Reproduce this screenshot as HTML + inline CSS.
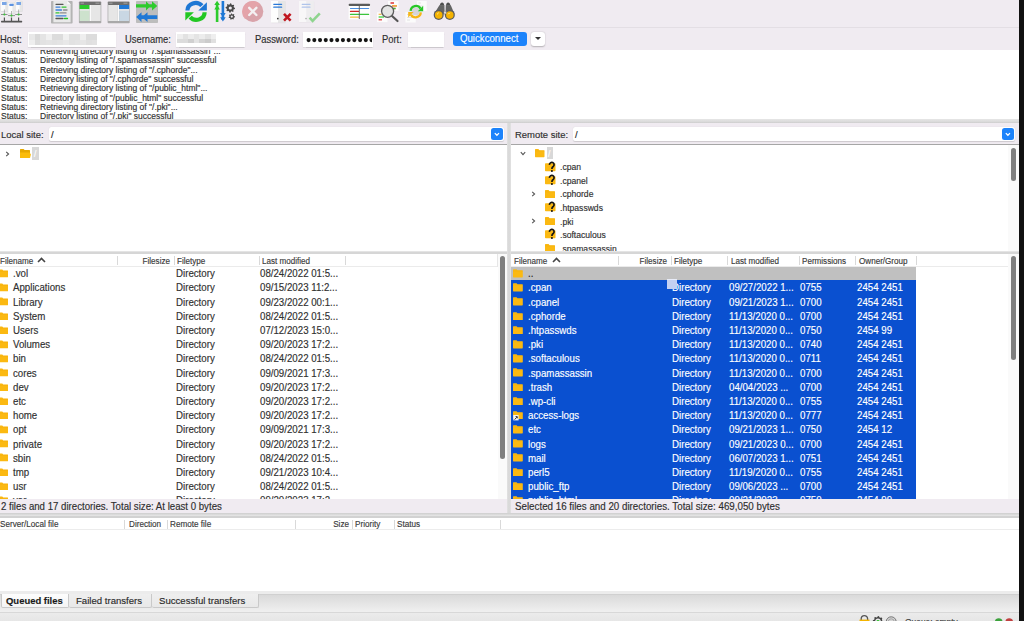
<!DOCTYPE html><html><head><meta charset="utf-8"><style>html,body{margin:0;padding:0;width:1024px;height:621px;overflow:hidden;background:#fff;position:relative}.t{position:absolute;white-space:nowrap;line-height:1;font-family:"Liberation Sans", sans-serif;-webkit-text-stroke:0.15px currentColor}</style></head><body><div style="position:absolute;left:0.00px;top:0.00px;width:1019.00px;height:50.00px;background:#f0ebf1"></div>
<div style="position:absolute;left:0.00px;top:27.30px;width:1019.00px;height:1.00px;background:#e3dee4"></div>
<div style="position:absolute;left:0.00px;top:50.00px;width:1019.00px;height:69.00px;background:#fff"></div>
<div style="position:absolute;left:0.00px;top:119.00px;width:1019.00px;height:4.00px;background:linear-gradient(#e6e6e6,#dcdcdc 60%,#cdcdcd)"></div>
<div style="position:absolute;left:1019.00px;top:0.00px;width:5.00px;height:621.00px;background:#111"></div>
<div class="t" style="left:0.00px;top:35px;font-size:10.34px;color:#2e2e2e;font-weight:normal;transform:scaleX(0.9090);transform-origin:0 0;">Host:</div>
<div style="position:absolute;left:28.00px;top:31.50px;width:88.00px;height:15.30px;background:#fff;box-shadow:0 0.5px 1px rgba(0,0,0,0.15)"></div>
<div style="position:absolute;left:28.90px;top:34.00px;width:5.75px;height:5.70px;background:#e8e8e8"></div>
<div style="position:absolute;left:28.90px;top:39.70px;width:5.75px;height:5.20px;background:#eeeeee"></div>
<div style="position:absolute;left:34.61px;top:34.00px;width:5.75px;height:5.70px;background:#d9d9d9"></div>
<div style="position:absolute;left:34.61px;top:39.70px;width:5.75px;height:5.20px;background:#dcdcdc"></div>
<div style="position:absolute;left:40.32px;top:34.00px;width:5.75px;height:5.70px;background:#e4e4e4"></div>
<div style="position:absolute;left:40.32px;top:39.70px;width:5.75px;height:5.20px;background:#e2e2e2"></div>
<div style="position:absolute;left:46.03px;top:34.00px;width:5.75px;height:5.70px;background:#f0f0f0"></div>
<div style="position:absolute;left:46.03px;top:39.70px;width:5.75px;height:5.20px;background:#e4e4e4"></div>
<div style="position:absolute;left:51.74px;top:34.00px;width:5.75px;height:5.70px;background:#dcdcdc"></div>
<div style="position:absolute;left:51.74px;top:39.70px;width:5.75px;height:5.20px;background:#e2e2e2"></div>
<div style="position:absolute;left:57.45px;top:34.00px;width:5.75px;height:5.70px;background:#dcdcdc"></div>
<div style="position:absolute;left:57.45px;top:39.70px;width:5.75px;height:5.20px;background:#e4e4e4"></div>
<div style="position:absolute;left:63.16px;top:34.00px;width:5.75px;height:5.70px;background:#f0f0f0"></div>
<div style="position:absolute;left:63.16px;top:39.70px;width:5.75px;height:5.20px;background:#e8e8e8"></div>
<div style="position:absolute;left:68.87px;top:34.00px;width:5.75px;height:5.70px;background:#e0e0e0"></div>
<div style="position:absolute;left:68.87px;top:39.70px;width:5.75px;height:5.20px;background:#e2e2e2"></div>
<div style="position:absolute;left:74.58px;top:34.00px;width:5.75px;height:5.70px;background:#e0e0e0"></div>
<div style="position:absolute;left:74.58px;top:39.70px;width:5.75px;height:5.20px;background:#e4e4e4"></div>
<div style="position:absolute;left:80.29px;top:34.00px;width:5.75px;height:5.70px;background:#eeeeee"></div>
<div style="position:absolute;left:80.29px;top:39.70px;width:5.75px;height:5.20px;background:#e6e6e6"></div>
<div style="position:absolute;left:86.00px;top:34.00px;width:5.75px;height:5.70px;background:#dcdcdc"></div>
<div style="position:absolute;left:86.00px;top:39.70px;width:5.75px;height:5.20px;background:#e0e0e0"></div>
<div style="position:absolute;left:91.71px;top:34.00px;width:5.75px;height:5.70px;background:#dcdcdc"></div>
<div style="position:absolute;left:91.71px;top:39.70px;width:5.75px;height:5.20px;background:#e2e2e2"></div>
<div class="t" style="left:125.00px;top:35px;font-size:10.34px;color:#2e2e2e;font-weight:normal;transform:scaleX(0.9090);transform-origin:0 0;">Username:</div>
<div style="position:absolute;left:176.00px;top:31.50px;width:69.00px;height:15.30px;background:#fff;box-shadow:0 0.5px 1px rgba(0,0,0,0.15)"></div>
<div style="position:absolute;left:177.00px;top:33.90px;width:5.63px;height:5.50px;background:#eeeeee"></div>
<div style="position:absolute;left:177.00px;top:39.40px;width:5.63px;height:3.50px;background:#dcdcdc"></div>
<div style="position:absolute;left:182.59px;top:33.90px;width:5.63px;height:5.50px;background:#e2e2e2"></div>
<div style="position:absolute;left:182.59px;top:39.40px;width:5.63px;height:3.50px;background:#dcdcdc"></div>
<div style="position:absolute;left:188.18px;top:33.90px;width:5.63px;height:5.50px;background:#ececec"></div>
<div style="position:absolute;left:188.18px;top:39.40px;width:5.63px;height:3.50px;background:#d0d0d0"></div>
<div style="position:absolute;left:193.77px;top:33.90px;width:5.63px;height:5.50px;background:#e4e4e4"></div>
<div style="position:absolute;left:193.77px;top:39.40px;width:5.63px;height:3.50px;background:#e4e4e4"></div>
<div style="position:absolute;left:199.36px;top:33.90px;width:5.63px;height:5.50px;background:#ececec"></div>
<div style="position:absolute;left:199.36px;top:39.40px;width:5.63px;height:3.50px;background:#d4d4d4"></div>
<div style="position:absolute;left:204.95px;top:33.90px;width:5.63px;height:5.50px;background:#e2e2e2"></div>
<div style="position:absolute;left:204.95px;top:39.40px;width:5.63px;height:3.50px;background:#cccccc"></div>
<div style="position:absolute;left:210.54px;top:33.90px;width:5.63px;height:5.50px;background:#eeeeee"></div>
<div style="position:absolute;left:210.54px;top:39.40px;width:5.63px;height:3.50px;background:#e0e0e0"></div>
<div class="t" style="left:254.50px;top:35px;font-size:10.34px;color:#2e2e2e;font-weight:normal;transform:scaleX(0.9090);transform-origin:0 0;">Password:</div>
<div style="position:absolute;left:303.00px;top:31.50px;width:70.00px;height:15.30px;background:#fff;box-shadow:0 0.5px 1px rgba(0,0,0,0.15);overflow:hidden"></div>
<svg style="position:absolute;left:303px;top:31.5px" width="69" height="15" viewBox="0 -0.5 69 15"><circle cx="5.60" cy="7.6" r="2.05" fill="#151515"/><circle cx="11.32" cy="7.6" r="2.05" fill="#151515"/><circle cx="17.04" cy="7.6" r="2.05" fill="#151515"/><circle cx="22.76" cy="7.6" r="2.05" fill="#151515"/><circle cx="28.48" cy="7.6" r="2.05" fill="#151515"/><circle cx="34.20" cy="7.6" r="2.05" fill="#151515"/><circle cx="39.92" cy="7.6" r="2.05" fill="#151515"/><circle cx="45.64" cy="7.6" r="2.05" fill="#151515"/><circle cx="51.36" cy="7.6" r="2.05" fill="#151515"/><circle cx="57.08" cy="7.6" r="2.05" fill="#151515"/><circle cx="62.80" cy="7.6" r="2.05" fill="#151515"/><circle cx="68.52" cy="7.6" r="2.05" fill="#151515"/></svg>
<div class="t" style="left:381.50px;top:35px;font-size:10.34px;color:#2e2e2e;font-weight:normal;transform:scaleX(0.9090);transform-origin:0 0;">Port:</div>
<div style="position:absolute;left:408.00px;top:31.50px;width:36.00px;height:15.30px;background:#fff;box-shadow:0 0.5px 1px rgba(0,0,0,0.15)"></div>
<div style="position:absolute;left:453.00px;top:31.90px;width:74.00px;height:14.30px;background:#1c83fb;border-radius:3px"></div>
<div class="t" style="left:460.40px;top:34px;font-size:10.04px;color:#fff;font-weight:normal;transform:scaleX(0.9620);transform-origin:0 0;-webkit-text-stroke:0.1px #fff">Quickconnect</div>
<div style="position:absolute;left:531.30px;top:32.20px;width:13.50px;height:13.80px;background:#fff;border-radius:3px;box-shadow:0 0.5px 1.5px rgba(0,0,0,0.25)"></div>
<div style="position:absolute;left:534.8px;top:37.3px;width:0;height:0;border-left:3.3px solid transparent;border-right:3.3px solid transparent;border-top:3.2px solid #333"></div>
<div style="position:absolute;left:0;top:50px;width:1019px;height:69px;overflow:hidden">
<div class="t" style="left:0.70px;top:-3px;font-size:8.79px;color:#303030;font-weight:normal;transform:scaleX(0.9620);transform-origin:0 0;">Status:</div>
<div class="t" style="left:40.00px;top:-3px;font-size:8.84px;color:#303030;font-weight:normal;transform:scaleX(0.9620);transform-origin:0 0;">Retrieving directory listing of "/.spamassassin"...</div>
<div class="t" style="left:0.70px;top:6px;font-size:8.79px;color:#303030;font-weight:normal;transform:scaleX(0.9620);transform-origin:0 0;">Status:</div>
<div class="t" style="left:40.00px;top:6px;font-size:8.84px;color:#303030;font-weight:normal;transform:scaleX(0.9620);transform-origin:0 0;">Directory listing of "/.spamassassin" successful</div>
<div class="t" style="left:0.70px;top:16px;font-size:8.79px;color:#303030;font-weight:normal;transform:scaleX(0.9620);transform-origin:0 0;">Status:</div>
<div class="t" style="left:40.00px;top:16px;font-size:8.84px;color:#303030;font-weight:normal;transform:scaleX(0.9620);transform-origin:0 0;">Retrieving directory listing of "/.cphorde"...</div>
<div class="t" style="left:0.70px;top:25px;font-size:8.79px;color:#303030;font-weight:normal;transform:scaleX(0.9620);transform-origin:0 0;">Status:</div>
<div class="t" style="left:40.00px;top:25px;font-size:8.84px;color:#303030;font-weight:normal;transform:scaleX(0.9620);transform-origin:0 0;">Directory listing of "/.cphorde" successful</div>
<div class="t" style="left:0.70px;top:34px;font-size:8.79px;color:#303030;font-weight:normal;transform:scaleX(0.9620);transform-origin:0 0;">Status:</div>
<div class="t" style="left:40.00px;top:34px;font-size:8.84px;color:#303030;font-weight:normal;transform:scaleX(0.9620);transform-origin:0 0;">Retrieving directory listing of "/public_html"...</div>
<div class="t" style="left:0.70px;top:44px;font-size:8.79px;color:#303030;font-weight:normal;transform:scaleX(0.9620);transform-origin:0 0;">Status:</div>
<div class="t" style="left:40.00px;top:44px;font-size:8.84px;color:#303030;font-weight:normal;transform:scaleX(0.9620);transform-origin:0 0;">Directory listing of "/public_html" successful</div>
<div class="t" style="left:0.70px;top:53px;font-size:8.79px;color:#303030;font-weight:normal;transform:scaleX(0.9620);transform-origin:0 0;">Status:</div>
<div class="t" style="left:40.00px;top:53px;font-size:8.84px;color:#303030;font-weight:normal;transform:scaleX(0.9620);transform-origin:0 0;">Retrieving directory listing of "/.pki"...</div>
<div class="t" style="left:0.70px;top:62px;font-size:8.79px;color:#303030;font-weight:normal;transform:scaleX(0.9620);transform-origin:0 0;">Status:</div>
<div class="t" style="left:40.00px;top:62px;font-size:8.84px;color:#303030;font-weight:normal;transform:scaleX(0.9620);transform-origin:0 0;">Directory listing of "/.pki" successful</div>
</div>
<div style="position:absolute;left:0.00px;top:123.00px;width:507.00px;height:21.50px;background:#f0ebf1"></div>
<div style="position:absolute;left:511.00px;top:123.00px;width:508.00px;height:21.50px;background:#f0ebf1"></div>
<div style="position:absolute;left:507.00px;top:123.00px;width:4.00px;height:391.00px;background:linear-gradient(90deg,#e2e2e2,#d9d9d9 40%,#d9d9d9 60%,#e2e2e2)"></div>
<div style="position:absolute;left:0.00px;top:144.10px;width:507.00px;height:1.70px;background:#a6a6a6"></div>
<div style="position:absolute;left:511.00px;top:144.10px;width:508.00px;height:1.70px;background:#a6a6a6"></div>
<div class="t" style="left:0.50px;top:130px;font-size:9.83px;color:#2e2e2e;font-weight:normal;transform:scaleX(0.9620);transform-origin:0 0;">Local site:</div>
<div style="position:absolute;left:49.00px;top:127.00px;width:455.00px;height:14.00px;background:#fff;border-radius:2px;box-shadow:0 0.5px 1px rgba(0,0,0,0.15)"></div>
<div class="t" style="left:51.00px;top:130px;font-size:9.88px;color:#222;font-weight:normal;transform:scaleX(0.9620);transform-origin:0 0;">/</div>
<div style="position:absolute;left:491.30px;top:128.00px;width:11.70px;height:12.00px;background:#1c83fb;border-radius:2.5px"></div>
<svg style="position:absolute;left:491.3px;top:128px" width="12" height="12" viewBox="0 0 12 12"><path d="M3.8 5.1 L5.9 7.3 L8.0 5.1" stroke="#fff" stroke-width="1.25" fill="none"/></svg>
<div class="t" style="left:514.70px;top:130px;font-size:9.83px;color:#2e2e2e;font-weight:normal;transform:scaleX(0.9620);transform-origin:0 0;">Remote site:</div>
<div style="position:absolute;left:572.50px;top:127.00px;width:442.00px;height:14.00px;background:#fff;border-radius:2px;box-shadow:0 0.5px 1px rgba(0,0,0,0.15)"></div>
<div class="t" style="left:575.00px;top:130px;font-size:9.88px;color:#222;font-weight:normal;transform:scaleX(0.9620);transform-origin:0 0;">/</div>
<div style="position:absolute;left:1002.00px;top:128.00px;width:11.70px;height:12.00px;background:#1c83fb;border-radius:2.5px"></div>
<svg style="position:absolute;left:1002px;top:128px" width="12" height="12" viewBox="0 0 12 12"><path d="M3.8 5.1 L5.9 7.3 L8.0 5.1" stroke="#fff" stroke-width="1.25" fill="none"/></svg>
<div style="position:absolute;left:0.00px;top:145.20px;width:507.00px;height:106.00px;background:#fff"></div>
<div style="position:absolute;left:511.00px;top:145.20px;width:508.00px;height:106.00px;background:#fff"></div>
<svg style="position:absolute;left:4.80px;top:151.10px" width="5" height="6" viewBox="0 0 5 6"><path d="M1.2 0.8 L3.6 3 L1.2 5.2" stroke="#555" stroke-width="1.1" fill="none"/></svg>
<svg style="position:absolute;left:20px;top:148.8px" width="11" height="9" viewBox="0 0 11 9"><path d="M0 0.6 Q0 0 0.6 0 L3.6 0 L4.6 1 L9.4 1 Q10 1 10 1.6 L10 8.4 Q10 9 9.4 9 L0.6 9 Q0 9 0 8.4 Z" fill="#e6a800"/><path d="M0 3.6 L9.6 3.6 L10.9 5.4 L10 9 L0.6 9 Q0 9 0 8.4 Z" fill="#fbbc0a"/></svg>
<div style="position:absolute;left:32.00px;top:147.20px;width:7.00px;height:12.50px;background:#d8d8d8"></div>
<div class="t" style="left:33.50px;top:150px;font-size:8.94px;color:#fff;font-weight:normal;transform:scaleX(0.9620);transform-origin:0 0;">/</div>
<svg style="position:absolute;left:519.50px;top:151.00px" width="6" height="5" viewBox="0 0 6 5"><path d="M0.8 1.2 L3 3.6 L5.2 1.2" stroke="#555" stroke-width="1.1" fill="none"/></svg>
<svg style="position:absolute;left:535.00px;top:149.30px" width="9.5" height="8.3" viewBox="0 0 10 8.5"><path d="M0 0.6 Q0 0 0.6 0 L3.6 0 L4.6 1.2 L9.4 1.2 Q10 1.2 10 1.8 L10 7.9 Q10 8.5 9.4 8.5 L0.6 8.5 Q0 8.5 0 7.9 Z" fill="#fbb912"/><rect x="0" y="1.6" width="10" height="0.6" fill="#f0a800" opacity="0.5"/></svg>
<div style="position:absolute;left:546.70px;top:147.40px;width:6.80px;height:12.00px;background:#d8d8d8"></div>
<div class="t" style="left:548.20px;top:150px;font-size:8.94px;color:#fff;font-weight:normal;transform:scaleX(0.9620);transform-origin:0 0;">/</div>
<div style="position:absolute;left:511px;top:145.2px;width:497px;height:106.3px;overflow:hidden">
<svg style="position:absolute;left:34px;top:15.45px" width="12" height="12" viewBox="545 161 12 12"><rect x="545" y="163.3" width="10.5" height="7.9" rx="0.8" fill="#fbb912"/><path d="M549.5 164.9 A2.3 2.3 0 1 1 553.2 166.5 Q551.9 167.3 551.9 168.9" stroke="#151515" stroke-width="1.7" fill="none"/><circle cx="551.9" cy="171" r="1.05" fill="#151515"/></svg>
<div class="t" style="left:48.50px;top:18px;font-size:8.94px;color:#303030;font-weight:normal;transform:scaleX(0.9620);transform-origin:0 0;">.cpan</div>
<svg style="position:absolute;left:34px;top:29.00px" width="12" height="12" viewBox="545 161 12 12"><rect x="545" y="163.3" width="10.5" height="7.9" rx="0.8" fill="#fbb912"/><path d="M549.5 164.9 A2.3 2.3 0 1 1 553.2 166.5 Q551.9 167.3 551.9 168.9" stroke="#151515" stroke-width="1.7" fill="none"/><circle cx="551.9" cy="171" r="1.05" fill="#151515"/></svg>
<div class="t" style="left:48.50px;top:32px;font-size:8.94px;color:#303030;font-weight:normal;transform:scaleX(0.9620);transform-origin:0 0;">.cpanel</div>
<svg style="position:absolute;left:34.00px;top:44.65px" width="10" height="8.5" viewBox="0 0 10 8.5"><path d="M0 0.6 Q0 0 0.6 0 L3.6 0 L4.6 1.2 L9.4 1.2 Q10 1.2 10 1.8 L10 7.9 Q10 8.5 9.4 8.5 L0.6 8.5 Q0 8.5 0 7.9 Z" fill="#fbb912"/><rect x="0" y="1.6" width="10" height="0.6" fill="#f0a800" opacity="0.5"/></svg>
<svg style="position:absolute;left:19.50px;top:45.85px" width="5" height="6" viewBox="0 0 5 6"><path d="M1.2 0.8 L3.6 3 L1.2 5.2" stroke="#555" stroke-width="1.1" fill="none"/></svg>
<div class="t" style="left:48.50px;top:45px;font-size:8.94px;color:#303030;font-weight:normal;transform:scaleX(0.9620);transform-origin:0 0;">.cphorde</div>
<svg style="position:absolute;left:34px;top:56.10px" width="12" height="12" viewBox="545 161 12 12"><rect x="545" y="163.3" width="10.5" height="7.9" rx="0.8" fill="#fbb912"/><path d="M549.5 164.9 A2.3 2.3 0 1 1 553.2 166.5 Q551.9 167.3 551.9 168.9" stroke="#151515" stroke-width="1.7" fill="none"/><circle cx="551.9" cy="171" r="1.05" fill="#151515"/></svg>
<div class="t" style="left:48.50px;top:59px;font-size:8.94px;color:#303030;font-weight:normal;transform:scaleX(0.9620);transform-origin:0 0;">.htpasswds</div>
<svg style="position:absolute;left:34.00px;top:71.75px" width="10" height="8.5" viewBox="0 0 10 8.5"><path d="M0 0.6 Q0 0 0.6 0 L3.6 0 L4.6 1.2 L9.4 1.2 Q10 1.2 10 1.8 L10 7.9 Q10 8.5 9.4 8.5 L0.6 8.5 Q0 8.5 0 7.9 Z" fill="#fbb912"/><rect x="0" y="1.6" width="10" height="0.6" fill="#f0a800" opacity="0.5"/></svg>
<svg style="position:absolute;left:19.50px;top:72.95px" width="5" height="6" viewBox="0 0 5 6"><path d="M1.2 0.8 L3.6 3 L1.2 5.2" stroke="#555" stroke-width="1.1" fill="none"/></svg>
<div class="t" style="left:48.50px;top:73px;font-size:8.94px;color:#303030;font-weight:normal;transform:scaleX(0.9620);transform-origin:0 0;">.pki</div>
<svg style="position:absolute;left:34px;top:83.20px" width="12" height="12" viewBox="545 161 12 12"><rect x="545" y="163.3" width="10.5" height="7.9" rx="0.8" fill="#fbb912"/><path d="M549.5 164.9 A2.3 2.3 0 1 1 553.2 166.5 Q551.9 167.3 551.9 168.9" stroke="#151515" stroke-width="1.7" fill="none"/><circle cx="551.9" cy="171" r="1.05" fill="#151515"/></svg>
<div class="t" style="left:48.50px;top:86px;font-size:8.94px;color:#303030;font-weight:normal;transform:scaleX(0.9620);transform-origin:0 0;">.softaculous</div>
<svg style="position:absolute;left:34.00px;top:98.85px" width="10" height="8.5" viewBox="0 0 10 8.5"><path d="M0 0.6 Q0 0 0.6 0 L3.6 0 L4.6 1.2 L9.4 1.2 Q10 1.2 10 1.8 L10 7.9 Q10 8.5 9.4 8.5 L0.6 8.5 Q0 8.5 0 7.9 Z" fill="#fbb912"/><rect x="0" y="1.6" width="10" height="0.6" fill="#f0a800" opacity="0.5"/></svg>
<div class="t" style="left:48.50px;top:100px;font-size:8.94px;color:#303030;font-weight:normal;transform:scaleX(0.9620);transform-origin:0 0;">.spamassassin</div>
</div>
<div style="position:absolute;left:1008.00px;top:145.20px;width:11.00px;height:106.00px;background:#fafafa"></div>
<div style="position:absolute;left:1011.00px;top:147.80px;width:5.20px;height:33.50px;background:#7f7f7f;border-radius:3px"></div>
<div style="position:absolute;left:0.00px;top:251.10px;width:507.00px;height:3.30px;background:linear-gradient(#e6e6e6,#e2e2e2 35%,#d6d6d6 45%,#d6d6d6 90%,#e2e2e2)"></div>
<div style="position:absolute;left:511.00px;top:251.10px;width:508.00px;height:3.30px;background:linear-gradient(#e6e6e6,#e2e2e2 35%,#d6d6d6 45%,#d6d6d6 90%,#e2e2e2)"></div>
<div style="position:absolute;left:0.00px;top:254.20px;width:497.00px;height:12.40px;background:#fff"></div>
<div style="position:absolute;left:0.00px;top:266.40px;width:497.00px;height:0.80px;background:#ebebeb"></div>
<div style="position:absolute;left:511.00px;top:254.20px;width:497.00px;height:12.40px;background:#fff"></div>
<div style="position:absolute;left:511.00px;top:266.40px;width:497.00px;height:0.80px;background:#ebebeb"></div>
<div class="t" style="left:0.00px;top:257px;font-size:8.42px;color:#3a3a3a;font-weight:normal;transform:scaleX(0.9620);transform-origin:0 0;">Filename</div>
<svg style="position:absolute;left:36.50px;top:257.40px" width="9" height="6" viewBox="0 0 9 6"><path d="M1 5 L4.5 1.5 L8 5" stroke="#444" stroke-width="1.6" fill="none"/></svg>
<div style="position:absolute;left:117.10px;top:256.20px;width:0.70px;height:9.00px;background:#d9d9d9"></div>
<div class="t" style="left:-129.70px;width:300px;text-align:right;top:257px;font-size:8.42px;color:#3a3a3a;font-weight:normal;transform:scaleX(0.9620);transform-origin:100% 0;">Filesize</div>
<div style="position:absolute;left:174.00px;top:256.20px;width:0.70px;height:9.00px;background:#d9d9d9"></div>
<div class="t" style="left:177.00px;top:257px;font-size:8.42px;color:#3a3a3a;font-weight:normal;transform:scaleX(0.9620);transform-origin:0 0;">Filetype</div>
<div style="position:absolute;left:259.00px;top:256.20px;width:0.70px;height:9.00px;background:#d9d9d9"></div>
<div class="t" style="left:262.00px;top:257px;font-size:8.42px;color:#3a3a3a;font-weight:normal;transform:scaleX(0.9620);transform-origin:0 0;">Last modified</div>
<div style="position:absolute;left:344.70px;top:256.20px;width:0.70px;height:9.00px;background:#d9d9d9"></div>
<div style="position:absolute;left:497.00px;top:254.20px;width:0.60px;height:12.40px;background:#e6e6e6"></div>
<div class="t" style="left:514.00px;top:257px;font-size:8.42px;color:#3a3a3a;font-weight:normal;transform:scaleX(0.9620);transform-origin:0 0;">Filename</div>
<svg style="position:absolute;left:551.50px;top:257.40px" width="9" height="6" viewBox="0 0 9 6"><path d="M1 5 L4.5 1.5 L8 5" stroke="#444" stroke-width="1.6" fill="none"/></svg>
<div style="position:absolute;left:618.00px;top:256.20px;width:0.70px;height:9.00px;background:#d9d9d9"></div>
<div class="t" style="left:367.00px;width:300px;text-align:right;top:257px;font-size:8.42px;color:#3a3a3a;font-weight:normal;transform:scaleX(0.9620);transform-origin:100% 0;">Filesize</div>
<div style="position:absolute;left:670.50px;top:256.20px;width:0.70px;height:9.00px;background:#d9d9d9"></div>
<div class="t" style="left:673.90px;top:257px;font-size:8.42px;color:#3a3a3a;font-weight:normal;transform:scaleX(0.9620);transform-origin:0 0;">Filetype</div>
<div style="position:absolute;left:726.60px;top:256.20px;width:0.70px;height:9.00px;background:#d9d9d9"></div>
<div class="t" style="left:730.50px;top:257px;font-size:8.42px;color:#3a3a3a;font-weight:normal;transform:scaleX(0.9620);transform-origin:0 0;">Last modified</div>
<div style="position:absolute;left:798.70px;top:256.20px;width:0.70px;height:9.00px;background:#d9d9d9"></div>
<div class="t" style="left:801.80px;top:257px;font-size:8.42px;color:#3a3a3a;font-weight:normal;transform:scaleX(0.9620);transform-origin:0 0;">Permissions</div>
<div style="position:absolute;left:855.40px;top:256.20px;width:0.70px;height:9.00px;background:#d9d9d9"></div>
<div class="t" style="left:858.50px;top:257px;font-size:8.42px;color:#3a3a3a;font-weight:normal;transform:scaleX(0.9620);transform-origin:0 0;">Owner/Group</div>
<div style="position:absolute;left:916.00px;top:256.20px;width:0.70px;height:9.00px;background:#d9d9d9"></div>
<div style="position:absolute;left:0;top:266.80px;width:497px;height:232.20px;overflow:hidden;background:#fff">
<svg style="position:absolute;left:-1.20px;top:2.20px" width="9.1" height="8.6" viewBox="0 0 10 8.5"><path d="M0 0.6 Q0 0 0.6 0 L3.6 0 L4.6 1.2 L9.4 1.2 Q10 1.2 10 1.8 L10 7.9 Q10 8.5 9.4 8.5 L0.6 8.5 Q0 8.5 0 7.9 Z" fill="#fbb912"/><rect x="0" y="1.6" width="10" height="0.6" fill="#f0a800" opacity="0.5"/></svg>
<div class="t" style="left:13.40px;top:2px;font-size:10.09px;color:#303030;font-weight:normal;transform:scaleX(0.9620);transform-origin:0 0;">.vol</div>
<div class="t" style="left:175.70px;top:2px;font-size:10.09px;color:#303030;font-weight:normal;transform:scaleX(0.9620);transform-origin:0 0;">Directory</div>
<div class="t" style="left:260.30px;top:2px;font-size:10.09px;color:#303030;font-weight:normal;transform:scaleX(0.9620);transform-origin:0 0;">08/24/2022 01:5...</div>
<svg style="position:absolute;left:-1.20px;top:16.39px" width="9.1" height="8.6" viewBox="0 0 10 8.5"><path d="M0 0.6 Q0 0 0.6 0 L3.6 0 L4.6 1.2 L9.4 1.2 Q10 1.2 10 1.8 L10 7.9 Q10 8.5 9.4 8.5 L0.6 8.5 Q0 8.5 0 7.9 Z" fill="#fbb912"/><rect x="0" y="1.6" width="10" height="0.6" fill="#f0a800" opacity="0.5"/></svg>
<div class="t" style="left:13.40px;top:16px;font-size:10.09px;color:#303030;font-weight:normal;transform:scaleX(0.9620);transform-origin:0 0;">Applications</div>
<div class="t" style="left:175.70px;top:16px;font-size:10.09px;color:#303030;font-weight:normal;transform:scaleX(0.9620);transform-origin:0 0;">Directory</div>
<div class="t" style="left:260.30px;top:16px;font-size:10.09px;color:#303030;font-weight:normal;transform:scaleX(0.9620);transform-origin:0 0;">09/15/2023 11:2...</div>
<svg style="position:absolute;left:-1.20px;top:30.58px" width="9.1" height="8.6" viewBox="0 0 10 8.5"><path d="M0 0.6 Q0 0 0.6 0 L3.6 0 L4.6 1.2 L9.4 1.2 Q10 1.2 10 1.8 L10 7.9 Q10 8.5 9.4 8.5 L0.6 8.5 Q0 8.5 0 7.9 Z" fill="#fbb912"/><rect x="0" y="1.6" width="10" height="0.6" fill="#f0a800" opacity="0.5"/></svg>
<div class="t" style="left:13.40px;top:31px;font-size:10.09px;color:#303030;font-weight:normal;transform:scaleX(0.9620);transform-origin:0 0;">Library</div>
<div class="t" style="left:175.70px;top:31px;font-size:10.09px;color:#303030;font-weight:normal;transform:scaleX(0.9620);transform-origin:0 0;">Directory</div>
<div class="t" style="left:260.30px;top:31px;font-size:10.09px;color:#303030;font-weight:normal;transform:scaleX(0.9620);transform-origin:0 0;">09/23/2022 00:1...</div>
<svg style="position:absolute;left:-1.20px;top:44.77px" width="9.1" height="8.6" viewBox="0 0 10 8.5"><path d="M0 0.6 Q0 0 0.6 0 L3.6 0 L4.6 1.2 L9.4 1.2 Q10 1.2 10 1.8 L10 7.9 Q10 8.5 9.4 8.5 L0.6 8.5 Q0 8.5 0 7.9 Z" fill="#fbb912"/><rect x="0" y="1.6" width="10" height="0.6" fill="#f0a800" opacity="0.5"/></svg>
<div class="t" style="left:13.40px;top:45px;font-size:10.09px;color:#303030;font-weight:normal;transform:scaleX(0.9620);transform-origin:0 0;">System</div>
<div class="t" style="left:175.70px;top:45px;font-size:10.09px;color:#303030;font-weight:normal;transform:scaleX(0.9620);transform-origin:0 0;">Directory</div>
<div class="t" style="left:260.30px;top:45px;font-size:10.09px;color:#303030;font-weight:normal;transform:scaleX(0.9620);transform-origin:0 0;">08/24/2022 01:5...</div>
<svg style="position:absolute;left:-1.20px;top:58.96px" width="9.1" height="8.6" viewBox="0 0 10 8.5"><path d="M0 0.6 Q0 0 0.6 0 L3.6 0 L4.6 1.2 L9.4 1.2 Q10 1.2 10 1.8 L10 7.9 Q10 8.5 9.4 8.5 L0.6 8.5 Q0 8.5 0 7.9 Z" fill="#fbb912"/><rect x="0" y="1.6" width="10" height="0.6" fill="#f0a800" opacity="0.5"/></svg>
<div class="t" style="left:13.40px;top:59px;font-size:10.09px;color:#303030;font-weight:normal;transform:scaleX(0.9620);transform-origin:0 0;">Users</div>
<div class="t" style="left:175.70px;top:59px;font-size:10.09px;color:#303030;font-weight:normal;transform:scaleX(0.9620);transform-origin:0 0;">Directory</div>
<div class="t" style="left:260.30px;top:59px;font-size:10.09px;color:#303030;font-weight:normal;transform:scaleX(0.9620);transform-origin:0 0;">07/12/2023 15:0...</div>
<svg style="position:absolute;left:-1.20px;top:73.15px" width="9.1" height="8.6" viewBox="0 0 10 8.5"><path d="M0 0.6 Q0 0 0.6 0 L3.6 0 L4.6 1.2 L9.4 1.2 Q10 1.2 10 1.8 L10 7.9 Q10 8.5 9.4 8.5 L0.6 8.5 Q0 8.5 0 7.9 Z" fill="#fbb912"/><rect x="0" y="1.6" width="10" height="0.6" fill="#f0a800" opacity="0.5"/></svg>
<div class="t" style="left:13.40px;top:73px;font-size:10.09px;color:#303030;font-weight:normal;transform:scaleX(0.9620);transform-origin:0 0;">Volumes</div>
<div class="t" style="left:175.70px;top:73px;font-size:10.09px;color:#303030;font-weight:normal;transform:scaleX(0.9620);transform-origin:0 0;">Directory</div>
<div class="t" style="left:260.30px;top:73px;font-size:10.09px;color:#303030;font-weight:normal;transform:scaleX(0.9620);transform-origin:0 0;">09/20/2023 17:2...</div>
<svg style="position:absolute;left:-1.20px;top:87.34px" width="9.1" height="8.6" viewBox="0 0 10 8.5"><path d="M0 0.6 Q0 0 0.6 0 L3.6 0 L4.6 1.2 L9.4 1.2 Q10 1.2 10 1.8 L10 7.9 Q10 8.5 9.4 8.5 L0.6 8.5 Q0 8.5 0 7.9 Z" fill="#fbb912"/><rect x="0" y="1.6" width="10" height="0.6" fill="#f0a800" opacity="0.5"/></svg>
<div class="t" style="left:13.40px;top:87px;font-size:10.09px;color:#303030;font-weight:normal;transform:scaleX(0.9620);transform-origin:0 0;">bin</div>
<div class="t" style="left:175.70px;top:87px;font-size:10.09px;color:#303030;font-weight:normal;transform:scaleX(0.9620);transform-origin:0 0;">Directory</div>
<div class="t" style="left:260.30px;top:87px;font-size:10.09px;color:#303030;font-weight:normal;transform:scaleX(0.9620);transform-origin:0 0;">08/24/2022 01:5...</div>
<svg style="position:absolute;left:-1.20px;top:101.53px" width="9.1" height="8.6" viewBox="0 0 10 8.5"><path d="M0 0.6 Q0 0 0.6 0 L3.6 0 L4.6 1.2 L9.4 1.2 Q10 1.2 10 1.8 L10 7.9 Q10 8.5 9.4 8.5 L0.6 8.5 Q0 8.5 0 7.9 Z" fill="#fbb912"/><rect x="0" y="1.6" width="10" height="0.6" fill="#f0a800" opacity="0.5"/></svg>
<div class="t" style="left:13.40px;top:102px;font-size:10.09px;color:#303030;font-weight:normal;transform:scaleX(0.9620);transform-origin:0 0;">cores</div>
<div class="t" style="left:175.70px;top:102px;font-size:10.09px;color:#303030;font-weight:normal;transform:scaleX(0.9620);transform-origin:0 0;">Directory</div>
<div class="t" style="left:260.30px;top:102px;font-size:10.09px;color:#303030;font-weight:normal;transform:scaleX(0.9620);transform-origin:0 0;">09/09/2021 17:3...</div>
<svg style="position:absolute;left:-1.20px;top:115.72px" width="9.1" height="8.6" viewBox="0 0 10 8.5"><path d="M0 0.6 Q0 0 0.6 0 L3.6 0 L4.6 1.2 L9.4 1.2 Q10 1.2 10 1.8 L10 7.9 Q10 8.5 9.4 8.5 L0.6 8.5 Q0 8.5 0 7.9 Z" fill="#fbb912"/><rect x="0" y="1.6" width="10" height="0.6" fill="#f0a800" opacity="0.5"/></svg>
<div class="t" style="left:13.40px;top:116px;font-size:10.09px;color:#303030;font-weight:normal;transform:scaleX(0.9620);transform-origin:0 0;">dev</div>
<div class="t" style="left:175.70px;top:116px;font-size:10.09px;color:#303030;font-weight:normal;transform:scaleX(0.9620);transform-origin:0 0;">Directory</div>
<div class="t" style="left:260.30px;top:116px;font-size:10.09px;color:#303030;font-weight:normal;transform:scaleX(0.9620);transform-origin:0 0;">09/20/2023 17:2...</div>
<svg style="position:absolute;left:-1.20px;top:129.91px" width="9.1" height="8.6" viewBox="0 0 10 8.5"><path d="M0 0.6 Q0 0 0.6 0 L3.6 0 L4.6 1.2 L9.4 1.2 Q10 1.2 10 1.8 L10 7.9 Q10 8.5 9.4 8.5 L0.6 8.5 Q0 8.5 0 7.9 Z" fill="#fbb912"/><rect x="0" y="1.6" width="10" height="0.6" fill="#f0a800" opacity="0.5"/></svg>
<div class="t" style="left:13.40px;top:130px;font-size:10.09px;color:#303030;font-weight:normal;transform:scaleX(0.9620);transform-origin:0 0;">etc</div>
<div class="t" style="left:175.70px;top:130px;font-size:10.09px;color:#303030;font-weight:normal;transform:scaleX(0.9620);transform-origin:0 0;">Directory</div>
<div class="t" style="left:260.30px;top:130px;font-size:10.09px;color:#303030;font-weight:normal;transform:scaleX(0.9620);transform-origin:0 0;">09/20/2023 17:2...</div>
<svg style="position:absolute;left:-1.20px;top:144.10px" width="9.1" height="8.6" viewBox="0 0 10 8.5"><path d="M0 0.6 Q0 0 0.6 0 L3.6 0 L4.6 1.2 L9.4 1.2 Q10 1.2 10 1.8 L10 7.9 Q10 8.5 9.4 8.5 L0.6 8.5 Q0 8.5 0 7.9 Z" fill="#fbb912"/><rect x="0" y="1.6" width="10" height="0.6" fill="#f0a800" opacity="0.5"/></svg>
<div class="t" style="left:13.40px;top:144px;font-size:10.09px;color:#303030;font-weight:normal;transform:scaleX(0.9620);transform-origin:0 0;">home</div>
<div class="t" style="left:175.70px;top:144px;font-size:10.09px;color:#303030;font-weight:normal;transform:scaleX(0.9620);transform-origin:0 0;">Directory</div>
<div class="t" style="left:260.30px;top:144px;font-size:10.09px;color:#303030;font-weight:normal;transform:scaleX(0.9620);transform-origin:0 0;">09/20/2023 17:2...</div>
<svg style="position:absolute;left:-1.20px;top:158.29px" width="9.1" height="8.6" viewBox="0 0 10 8.5"><path d="M0 0.6 Q0 0 0.6 0 L3.6 0 L4.6 1.2 L9.4 1.2 Q10 1.2 10 1.8 L10 7.9 Q10 8.5 9.4 8.5 L0.6 8.5 Q0 8.5 0 7.9 Z" fill="#fbb912"/><rect x="0" y="1.6" width="10" height="0.6" fill="#f0a800" opacity="0.5"/></svg>
<div class="t" style="left:13.40px;top:158px;font-size:10.09px;color:#303030;font-weight:normal;transform:scaleX(0.9620);transform-origin:0 0;">opt</div>
<div class="t" style="left:175.70px;top:158px;font-size:10.09px;color:#303030;font-weight:normal;transform:scaleX(0.9620);transform-origin:0 0;">Directory</div>
<div class="t" style="left:260.30px;top:158px;font-size:10.09px;color:#303030;font-weight:normal;transform:scaleX(0.9620);transform-origin:0 0;">09/09/2021 17:3...</div>
<svg style="position:absolute;left:-1.20px;top:172.48px" width="9.1" height="8.6" viewBox="0 0 10 8.5"><path d="M0 0.6 Q0 0 0.6 0 L3.6 0 L4.6 1.2 L9.4 1.2 Q10 1.2 10 1.8 L10 7.9 Q10 8.5 9.4 8.5 L0.6 8.5 Q0 8.5 0 7.9 Z" fill="#fbb912"/><rect x="0" y="1.6" width="10" height="0.6" fill="#f0a800" opacity="0.5"/></svg>
<div class="t" style="left:13.40px;top:173px;font-size:10.09px;color:#303030;font-weight:normal;transform:scaleX(0.9620);transform-origin:0 0;">private</div>
<div class="t" style="left:175.70px;top:173px;font-size:10.09px;color:#303030;font-weight:normal;transform:scaleX(0.9620);transform-origin:0 0;">Directory</div>
<div class="t" style="left:260.30px;top:173px;font-size:10.09px;color:#303030;font-weight:normal;transform:scaleX(0.9620);transform-origin:0 0;">09/20/2023 17:2...</div>
<svg style="position:absolute;left:-1.20px;top:186.67px" width="9.1" height="8.6" viewBox="0 0 10 8.5"><path d="M0 0.6 Q0 0 0.6 0 L3.6 0 L4.6 1.2 L9.4 1.2 Q10 1.2 10 1.8 L10 7.9 Q10 8.5 9.4 8.5 L0.6 8.5 Q0 8.5 0 7.9 Z" fill="#fbb912"/><rect x="0" y="1.6" width="10" height="0.6" fill="#f0a800" opacity="0.5"/></svg>
<div class="t" style="left:13.40px;top:187px;font-size:10.09px;color:#303030;font-weight:normal;transform:scaleX(0.9620);transform-origin:0 0;">sbin</div>
<div class="t" style="left:175.70px;top:187px;font-size:10.09px;color:#303030;font-weight:normal;transform:scaleX(0.9620);transform-origin:0 0;">Directory</div>
<div class="t" style="left:260.30px;top:187px;font-size:10.09px;color:#303030;font-weight:normal;transform:scaleX(0.9620);transform-origin:0 0;">08/24/2022 01:5...</div>
<svg style="position:absolute;left:-1.20px;top:200.86px" width="9.1" height="8.6" viewBox="0 0 10 8.5"><path d="M0 0.6 Q0 0 0.6 0 L3.6 0 L4.6 1.2 L9.4 1.2 Q10 1.2 10 1.8 L10 7.9 Q10 8.5 9.4 8.5 L0.6 8.5 Q0 8.5 0 7.9 Z" fill="#fbb912"/><rect x="0" y="1.6" width="10" height="0.6" fill="#f0a800" opacity="0.5"/></svg>
<div class="t" style="left:13.40px;top:201px;font-size:10.09px;color:#303030;font-weight:normal;transform:scaleX(0.9620);transform-origin:0 0;">tmp</div>
<div class="t" style="left:175.70px;top:201px;font-size:10.09px;color:#303030;font-weight:normal;transform:scaleX(0.9620);transform-origin:0 0;">Directory</div>
<div class="t" style="left:260.30px;top:201px;font-size:10.09px;color:#303030;font-weight:normal;transform:scaleX(0.9620);transform-origin:0 0;">09/21/2023 10:4...</div>
<svg style="position:absolute;left:-1.20px;top:215.05px" width="9.1" height="8.6" viewBox="0 0 10 8.5"><path d="M0 0.6 Q0 0 0.6 0 L3.6 0 L4.6 1.2 L9.4 1.2 Q10 1.2 10 1.8 L10 7.9 Q10 8.5 9.4 8.5 L0.6 8.5 Q0 8.5 0 7.9 Z" fill="#fbb912"/><rect x="0" y="1.6" width="10" height="0.6" fill="#f0a800" opacity="0.5"/></svg>
<div class="t" style="left:13.40px;top:215px;font-size:10.09px;color:#303030;font-weight:normal;transform:scaleX(0.9620);transform-origin:0 0;">usr</div>
<div class="t" style="left:175.70px;top:215px;font-size:10.09px;color:#303030;font-weight:normal;transform:scaleX(0.9620);transform-origin:0 0;">Directory</div>
<div class="t" style="left:260.30px;top:215px;font-size:10.09px;color:#303030;font-weight:normal;transform:scaleX(0.9620);transform-origin:0 0;">08/24/2022 01:5...</div>
<svg style="position:absolute;left:-1.20px;top:229.24px" width="9.1" height="8.6" viewBox="0 0 10 8.5"><path d="M0 0.6 Q0 0 0.6 0 L3.6 0 L4.6 1.2 L9.4 1.2 Q10 1.2 10 1.8 L10 7.9 Q10 8.5 9.4 8.5 L0.6 8.5 Q0 8.5 0 7.9 Z" fill="#fbb912"/><rect x="0" y="1.6" width="10" height="0.6" fill="#f0a800" opacity="0.5"/></svg>
<div class="t" style="left:13.40px;top:229px;font-size:10.09px;color:#303030;font-weight:normal;transform:scaleX(0.9620);transform-origin:0 0;">var</div>
<div class="t" style="left:175.70px;top:229px;font-size:10.09px;color:#303030;font-weight:normal;transform:scaleX(0.9620);transform-origin:0 0;">Directory</div>
<div class="t" style="left:260.30px;top:229px;font-size:10.09px;color:#303030;font-weight:normal;transform:scaleX(0.9620);transform-origin:0 0;">09/20/2023 17:2...</div>
</div>
<div style="position:absolute;left:497.60px;top:254.20px;width:9.40px;height:244.80px;background:#fafafa"></div>
<div style="position:absolute;left:499.70px;top:256.00px;width:5.80px;height:203.00px;background:#7f7f7f;border-radius:3px"></div>
<div style="position:absolute;left:511px;top:266.80px;width:497px;height:232.20px;overflow:hidden;background:#fff">
<div style="position:absolute;left:0.00px;top:0.00px;width:405.00px;height:13.29px;background:#c0c0c0"></div>
<svg style="position:absolute;left:1.80px;top:2.20px" width="9.8" height="8.6" viewBox="0 0 10 8.5"><path d="M0 0.6 Q0 0 0.6 0 L3.6 0 L4.6 1.2 L9.4 1.2 Q10 1.2 10 1.8 L10 7.9 Q10 8.5 9.4 8.5 L0.6 8.5 Q0 8.5 0 7.9 Z" fill="#fbb912"/><rect x="0" y="1.6" width="10" height="0.6" fill="#f0a800" opacity="0.5"/></svg>
<div class="t" style="left:16.50px;top:2px;font-size:10.09px;color:#222;font-weight:normal;transform:scaleX(0.9620);transform-origin:0 0;">..</div>
<div style="position:absolute;left:0.00px;top:13.29px;width:405.00px;height:229.04px;background:#0a50d0"></div>
<svg style="position:absolute;left:1.80px;top:16.39px" width="9.8" height="8.6" viewBox="0 0 10 8.5"><path d="M0 0.6 Q0 0 0.6 0 L3.6 0 L4.6 1.2 L9.4 1.2 Q10 1.2 10 1.8 L10 7.9 Q10 8.5 9.4 8.5 L0.6 8.5 Q0 8.5 0 7.9 Z" fill="#fbb912"/><rect x="0" y="1.6" width="10" height="0.6" fill="#f0a800" opacity="0.5"/></svg>
<div class="t" style="left:16.50px;top:16px;font-size:10.09px;color:#fff;font-weight:normal;transform:scaleX(0.9620);transform-origin:0 0;">.cpan</div>
<div class="t" style="left:160.90px;top:16px;font-size:10.09px;color:#fff;font-weight:normal;transform:scaleX(0.9620);transform-origin:0 0;">Directory</div>
<div class="t" style="left:217.80px;top:16px;font-size:10.09px;color:#fff;font-weight:normal;transform:scaleX(0.9620);transform-origin:0 0;">09/27/2022 1...</div>
<div class="t" style="left:288.80px;top:16px;font-size:10.09px;color:#fff;font-weight:normal;transform:scaleX(0.9620);transform-origin:0 0;">0755</div>
<div class="t" style="left:346.20px;top:16px;font-size:10.09px;color:#fff;font-weight:normal;transform:scaleX(0.9620);transform-origin:0 0;">2454 2451</div>
<svg style="position:absolute;left:1.80px;top:30.58px" width="9.8" height="8.6" viewBox="0 0 10 8.5"><path d="M0 0.6 Q0 0 0.6 0 L3.6 0 L4.6 1.2 L9.4 1.2 Q10 1.2 10 1.8 L10 7.9 Q10 8.5 9.4 8.5 L0.6 8.5 Q0 8.5 0 7.9 Z" fill="#fbb912"/><rect x="0" y="1.6" width="10" height="0.6" fill="#f0a800" opacity="0.5"/></svg>
<div class="t" style="left:16.50px;top:31px;font-size:10.09px;color:#fff;font-weight:normal;transform:scaleX(0.9620);transform-origin:0 0;">.cpanel</div>
<div class="t" style="left:160.90px;top:31px;font-size:10.09px;color:#fff;font-weight:normal;transform:scaleX(0.9620);transform-origin:0 0;">Directory</div>
<div class="t" style="left:217.80px;top:31px;font-size:10.09px;color:#fff;font-weight:normal;transform:scaleX(0.9620);transform-origin:0 0;">09/21/2023 1...</div>
<div class="t" style="left:288.80px;top:31px;font-size:10.09px;color:#fff;font-weight:normal;transform:scaleX(0.9620);transform-origin:0 0;">0700</div>
<div class="t" style="left:346.20px;top:31px;font-size:10.09px;color:#fff;font-weight:normal;transform:scaleX(0.9620);transform-origin:0 0;">2454 2451</div>
<svg style="position:absolute;left:1.80px;top:44.77px" width="9.8" height="8.6" viewBox="0 0 10 8.5"><path d="M0 0.6 Q0 0 0.6 0 L3.6 0 L4.6 1.2 L9.4 1.2 Q10 1.2 10 1.8 L10 7.9 Q10 8.5 9.4 8.5 L0.6 8.5 Q0 8.5 0 7.9 Z" fill="#fbb912"/><rect x="0" y="1.6" width="10" height="0.6" fill="#f0a800" opacity="0.5"/></svg>
<div class="t" style="left:16.50px;top:45px;font-size:10.09px;color:#fff;font-weight:normal;transform:scaleX(0.9620);transform-origin:0 0;">.cphorde</div>
<div class="t" style="left:160.90px;top:45px;font-size:10.09px;color:#fff;font-weight:normal;transform:scaleX(0.9620);transform-origin:0 0;">Directory</div>
<div class="t" style="left:217.80px;top:45px;font-size:10.09px;color:#fff;font-weight:normal;transform:scaleX(0.9620);transform-origin:0 0;">11/13/2020 0...</div>
<div class="t" style="left:288.80px;top:45px;font-size:10.09px;color:#fff;font-weight:normal;transform:scaleX(0.9620);transform-origin:0 0;">0700</div>
<div class="t" style="left:346.20px;top:45px;font-size:10.09px;color:#fff;font-weight:normal;transform:scaleX(0.9620);transform-origin:0 0;">2454 2451</div>
<svg style="position:absolute;left:1.80px;top:58.96px" width="9.8" height="8.6" viewBox="0 0 10 8.5"><path d="M0 0.6 Q0 0 0.6 0 L3.6 0 L4.6 1.2 L9.4 1.2 Q10 1.2 10 1.8 L10 7.9 Q10 8.5 9.4 8.5 L0.6 8.5 Q0 8.5 0 7.9 Z" fill="#fbb912"/><rect x="0" y="1.6" width="10" height="0.6" fill="#f0a800" opacity="0.5"/></svg>
<div class="t" style="left:16.50px;top:59px;font-size:10.09px;color:#fff;font-weight:normal;transform:scaleX(0.9620);transform-origin:0 0;">.htpasswds</div>
<div class="t" style="left:160.90px;top:59px;font-size:10.09px;color:#fff;font-weight:normal;transform:scaleX(0.9620);transform-origin:0 0;">Directory</div>
<div class="t" style="left:217.80px;top:59px;font-size:10.09px;color:#fff;font-weight:normal;transform:scaleX(0.9620);transform-origin:0 0;">11/13/2020 0...</div>
<div class="t" style="left:288.80px;top:59px;font-size:10.09px;color:#fff;font-weight:normal;transform:scaleX(0.9620);transform-origin:0 0;">0750</div>
<div class="t" style="left:346.20px;top:59px;font-size:10.09px;color:#fff;font-weight:normal;transform:scaleX(0.9620);transform-origin:0 0;">2454 99</div>
<svg style="position:absolute;left:1.80px;top:73.15px" width="9.8" height="8.6" viewBox="0 0 10 8.5"><path d="M0 0.6 Q0 0 0.6 0 L3.6 0 L4.6 1.2 L9.4 1.2 Q10 1.2 10 1.8 L10 7.9 Q10 8.5 9.4 8.5 L0.6 8.5 Q0 8.5 0 7.9 Z" fill="#fbb912"/><rect x="0" y="1.6" width="10" height="0.6" fill="#f0a800" opacity="0.5"/></svg>
<div class="t" style="left:16.50px;top:73px;font-size:10.09px;color:#fff;font-weight:normal;transform:scaleX(0.9620);transform-origin:0 0;">.pki</div>
<div class="t" style="left:160.90px;top:73px;font-size:10.09px;color:#fff;font-weight:normal;transform:scaleX(0.9620);transform-origin:0 0;">Directory</div>
<div class="t" style="left:217.80px;top:73px;font-size:10.09px;color:#fff;font-weight:normal;transform:scaleX(0.9620);transform-origin:0 0;">11/13/2020 0...</div>
<div class="t" style="left:288.80px;top:73px;font-size:10.09px;color:#fff;font-weight:normal;transform:scaleX(0.9620);transform-origin:0 0;">0740</div>
<div class="t" style="left:346.20px;top:73px;font-size:10.09px;color:#fff;font-weight:normal;transform:scaleX(0.9620);transform-origin:0 0;">2454 2451</div>
<svg style="position:absolute;left:1.80px;top:87.34px" width="9.8" height="8.6" viewBox="0 0 10 8.5"><path d="M0 0.6 Q0 0 0.6 0 L3.6 0 L4.6 1.2 L9.4 1.2 Q10 1.2 10 1.8 L10 7.9 Q10 8.5 9.4 8.5 L0.6 8.5 Q0 8.5 0 7.9 Z" fill="#fbb912"/><rect x="0" y="1.6" width="10" height="0.6" fill="#f0a800" opacity="0.5"/></svg>
<div class="t" style="left:16.50px;top:87px;font-size:10.09px;color:#fff;font-weight:normal;transform:scaleX(0.9620);transform-origin:0 0;">.softaculous</div>
<div class="t" style="left:160.90px;top:87px;font-size:10.09px;color:#fff;font-weight:normal;transform:scaleX(0.9620);transform-origin:0 0;">Directory</div>
<div class="t" style="left:217.80px;top:87px;font-size:10.09px;color:#fff;font-weight:normal;transform:scaleX(0.9620);transform-origin:0 0;">11/13/2020 0...</div>
<div class="t" style="left:288.80px;top:87px;font-size:10.09px;color:#fff;font-weight:normal;transform:scaleX(0.9620);transform-origin:0 0;">0711</div>
<div class="t" style="left:346.20px;top:87px;font-size:10.09px;color:#fff;font-weight:normal;transform:scaleX(0.9620);transform-origin:0 0;">2454 2451</div>
<svg style="position:absolute;left:1.80px;top:101.53px" width="9.8" height="8.6" viewBox="0 0 10 8.5"><path d="M0 0.6 Q0 0 0.6 0 L3.6 0 L4.6 1.2 L9.4 1.2 Q10 1.2 10 1.8 L10 7.9 Q10 8.5 9.4 8.5 L0.6 8.5 Q0 8.5 0 7.9 Z" fill="#fbb912"/><rect x="0" y="1.6" width="10" height="0.6" fill="#f0a800" opacity="0.5"/></svg>
<div class="t" style="left:16.50px;top:102px;font-size:10.09px;color:#fff;font-weight:normal;transform:scaleX(0.9620);transform-origin:0 0;">.spamassassin</div>
<div class="t" style="left:160.90px;top:102px;font-size:10.09px;color:#fff;font-weight:normal;transform:scaleX(0.9620);transform-origin:0 0;">Directory</div>
<div class="t" style="left:217.80px;top:102px;font-size:10.09px;color:#fff;font-weight:normal;transform:scaleX(0.9620);transform-origin:0 0;">11/13/2020 0...</div>
<div class="t" style="left:288.80px;top:102px;font-size:10.09px;color:#fff;font-weight:normal;transform:scaleX(0.9620);transform-origin:0 0;">0700</div>
<div class="t" style="left:346.20px;top:102px;font-size:10.09px;color:#fff;font-weight:normal;transform:scaleX(0.9620);transform-origin:0 0;">2454 2451</div>
<svg style="position:absolute;left:1.80px;top:115.72px" width="9.8" height="8.6" viewBox="0 0 10 8.5"><path d="M0 0.6 Q0 0 0.6 0 L3.6 0 L4.6 1.2 L9.4 1.2 Q10 1.2 10 1.8 L10 7.9 Q10 8.5 9.4 8.5 L0.6 8.5 Q0 8.5 0 7.9 Z" fill="#fbb912"/><rect x="0" y="1.6" width="10" height="0.6" fill="#f0a800" opacity="0.5"/></svg>
<div class="t" style="left:16.50px;top:116px;font-size:10.09px;color:#fff;font-weight:normal;transform:scaleX(0.9620);transform-origin:0 0;">.trash</div>
<div class="t" style="left:160.90px;top:116px;font-size:10.09px;color:#fff;font-weight:normal;transform:scaleX(0.9620);transform-origin:0 0;">Directory</div>
<div class="t" style="left:217.80px;top:116px;font-size:10.09px;color:#fff;font-weight:normal;transform:scaleX(0.9620);transform-origin:0 0;">04/04/2023 ...</div>
<div class="t" style="left:288.80px;top:116px;font-size:10.09px;color:#fff;font-weight:normal;transform:scaleX(0.9620);transform-origin:0 0;">0700</div>
<div class="t" style="left:346.20px;top:116px;font-size:10.09px;color:#fff;font-weight:normal;transform:scaleX(0.9620);transform-origin:0 0;">2454 2451</div>
<svg style="position:absolute;left:1.80px;top:129.91px" width="9.8" height="8.6" viewBox="0 0 10 8.5"><path d="M0 0.6 Q0 0 0.6 0 L3.6 0 L4.6 1.2 L9.4 1.2 Q10 1.2 10 1.8 L10 7.9 Q10 8.5 9.4 8.5 L0.6 8.5 Q0 8.5 0 7.9 Z" fill="#fbb912"/><rect x="0" y="1.6" width="10" height="0.6" fill="#f0a800" opacity="0.5"/></svg>
<div class="t" style="left:16.50px;top:130px;font-size:10.09px;color:#fff;font-weight:normal;transform:scaleX(0.9620);transform-origin:0 0;">.wp-cli</div>
<div class="t" style="left:160.90px;top:130px;font-size:10.09px;color:#fff;font-weight:normal;transform:scaleX(0.9620);transform-origin:0 0;">Directory</div>
<div class="t" style="left:217.80px;top:130px;font-size:10.09px;color:#fff;font-weight:normal;transform:scaleX(0.9620);transform-origin:0 0;">11/13/2020 0...</div>
<div class="t" style="left:288.80px;top:130px;font-size:10.09px;color:#fff;font-weight:normal;transform:scaleX(0.9620);transform-origin:0 0;">0755</div>
<div class="t" style="left:346.20px;top:130px;font-size:10.09px;color:#fff;font-weight:normal;transform:scaleX(0.9620);transform-origin:0 0;">2454 2451</div>
<svg style="position:absolute;left:1.80px;top:144.10px" width="9.8" height="8.6" viewBox="0 0 10 8.5"><path d="M0 0.6 Q0 0 0.6 0 L3.6 0 L4.6 1.2 L9.4 1.2 Q10 1.2 10 1.8 L10 7.9 Q10 8.5 9.4 8.5 L0.6 8.5 Q0 8.5 0 7.9 Z" fill="#fbb912"/><rect x="0" y="1.6" width="10" height="0.6" fill="#f0a800" opacity="0.5"/></svg>
<svg style="position:absolute;left:1.6px;top:148.00px" width="6" height="6" viewBox="0 0 6 6"><rect x="0.3" y="0" width="5.3" height="5.4" fill="#f4f6fb"/><path d="M1.6 4.6 L3.8 2.2 M2.6 1.6 H4.3 V3.3" stroke="#222" stroke-width="0.9" fill="none"/></svg>
<div class="t" style="left:16.50px;top:144px;font-size:10.09px;color:#fff;font-weight:normal;transform:scaleX(0.9620);transform-origin:0 0;">access-logs</div>
<div class="t" style="left:160.90px;top:144px;font-size:10.09px;color:#fff;font-weight:normal;transform:scaleX(0.9620);transform-origin:0 0;">Directory</div>
<div class="t" style="left:217.80px;top:144px;font-size:10.09px;color:#fff;font-weight:normal;transform:scaleX(0.9620);transform-origin:0 0;">11/13/2020 0...</div>
<div class="t" style="left:288.80px;top:144px;font-size:10.09px;color:#fff;font-weight:normal;transform:scaleX(0.9620);transform-origin:0 0;">0777</div>
<div class="t" style="left:346.20px;top:144px;font-size:10.09px;color:#fff;font-weight:normal;transform:scaleX(0.9620);transform-origin:0 0;">2454 2451</div>
<svg style="position:absolute;left:1.80px;top:158.29px" width="9.8" height="8.6" viewBox="0 0 10 8.5"><path d="M0 0.6 Q0 0 0.6 0 L3.6 0 L4.6 1.2 L9.4 1.2 Q10 1.2 10 1.8 L10 7.9 Q10 8.5 9.4 8.5 L0.6 8.5 Q0 8.5 0 7.9 Z" fill="#fbb912"/><rect x="0" y="1.6" width="10" height="0.6" fill="#f0a800" opacity="0.5"/></svg>
<div class="t" style="left:16.50px;top:158px;font-size:10.09px;color:#fff;font-weight:normal;transform:scaleX(0.9620);transform-origin:0 0;">etc</div>
<div class="t" style="left:160.90px;top:158px;font-size:10.09px;color:#fff;font-weight:normal;transform:scaleX(0.9620);transform-origin:0 0;">Directory</div>
<div class="t" style="left:217.80px;top:158px;font-size:10.09px;color:#fff;font-weight:normal;transform:scaleX(0.9620);transform-origin:0 0;">09/21/2023 1...</div>
<div class="t" style="left:288.80px;top:158px;font-size:10.09px;color:#fff;font-weight:normal;transform:scaleX(0.9620);transform-origin:0 0;">0750</div>
<div class="t" style="left:346.20px;top:158px;font-size:10.09px;color:#fff;font-weight:normal;transform:scaleX(0.9620);transform-origin:0 0;">2454 12</div>
<svg style="position:absolute;left:1.80px;top:172.48px" width="9.8" height="8.6" viewBox="0 0 10 8.5"><path d="M0 0.6 Q0 0 0.6 0 L3.6 0 L4.6 1.2 L9.4 1.2 Q10 1.2 10 1.8 L10 7.9 Q10 8.5 9.4 8.5 L0.6 8.5 Q0 8.5 0 7.9 Z" fill="#fbb912"/><rect x="0" y="1.6" width="10" height="0.6" fill="#f0a800" opacity="0.5"/></svg>
<div class="t" style="left:16.50px;top:173px;font-size:10.09px;color:#fff;font-weight:normal;transform:scaleX(0.9620);transform-origin:0 0;">logs</div>
<div class="t" style="left:160.90px;top:173px;font-size:10.09px;color:#fff;font-weight:normal;transform:scaleX(0.9620);transform-origin:0 0;">Directory</div>
<div class="t" style="left:217.80px;top:173px;font-size:10.09px;color:#fff;font-weight:normal;transform:scaleX(0.9620);transform-origin:0 0;">09/21/2023 0...</div>
<div class="t" style="left:288.80px;top:173px;font-size:10.09px;color:#fff;font-weight:normal;transform:scaleX(0.9620);transform-origin:0 0;">0700</div>
<div class="t" style="left:346.20px;top:173px;font-size:10.09px;color:#fff;font-weight:normal;transform:scaleX(0.9620);transform-origin:0 0;">2454 2451</div>
<svg style="position:absolute;left:1.80px;top:186.67px" width="9.8" height="8.6" viewBox="0 0 10 8.5"><path d="M0 0.6 Q0 0 0.6 0 L3.6 0 L4.6 1.2 L9.4 1.2 Q10 1.2 10 1.8 L10 7.9 Q10 8.5 9.4 8.5 L0.6 8.5 Q0 8.5 0 7.9 Z" fill="#fbb912"/><rect x="0" y="1.6" width="10" height="0.6" fill="#f0a800" opacity="0.5"/></svg>
<div class="t" style="left:16.50px;top:187px;font-size:10.09px;color:#fff;font-weight:normal;transform:scaleX(0.9620);transform-origin:0 0;">mail</div>
<div class="t" style="left:160.90px;top:187px;font-size:10.09px;color:#fff;font-weight:normal;transform:scaleX(0.9620);transform-origin:0 0;">Directory</div>
<div class="t" style="left:217.80px;top:187px;font-size:10.09px;color:#fff;font-weight:normal;transform:scaleX(0.9620);transform-origin:0 0;">06/07/2023 1...</div>
<div class="t" style="left:288.80px;top:187px;font-size:10.09px;color:#fff;font-weight:normal;transform:scaleX(0.9620);transform-origin:0 0;">0751</div>
<div class="t" style="left:346.20px;top:187px;font-size:10.09px;color:#fff;font-weight:normal;transform:scaleX(0.9620);transform-origin:0 0;">2454 2451</div>
<svg style="position:absolute;left:1.80px;top:200.86px" width="9.8" height="8.6" viewBox="0 0 10 8.5"><path d="M0 0.6 Q0 0 0.6 0 L3.6 0 L4.6 1.2 L9.4 1.2 Q10 1.2 10 1.8 L10 7.9 Q10 8.5 9.4 8.5 L0.6 8.5 Q0 8.5 0 7.9 Z" fill="#fbb912"/><rect x="0" y="1.6" width="10" height="0.6" fill="#f0a800" opacity="0.5"/></svg>
<div class="t" style="left:16.50px;top:201px;font-size:10.09px;color:#fff;font-weight:normal;transform:scaleX(0.9620);transform-origin:0 0;">perl5</div>
<div class="t" style="left:160.90px;top:201px;font-size:10.09px;color:#fff;font-weight:normal;transform:scaleX(0.9620);transform-origin:0 0;">Directory</div>
<div class="t" style="left:217.80px;top:201px;font-size:10.09px;color:#fff;font-weight:normal;transform:scaleX(0.9620);transform-origin:0 0;">11/19/2020 0...</div>
<div class="t" style="left:288.80px;top:201px;font-size:10.09px;color:#fff;font-weight:normal;transform:scaleX(0.9620);transform-origin:0 0;">0755</div>
<div class="t" style="left:346.20px;top:201px;font-size:10.09px;color:#fff;font-weight:normal;transform:scaleX(0.9620);transform-origin:0 0;">2454 2451</div>
<svg style="position:absolute;left:1.80px;top:215.05px" width="9.8" height="8.6" viewBox="0 0 10 8.5"><path d="M0 0.6 Q0 0 0.6 0 L3.6 0 L4.6 1.2 L9.4 1.2 Q10 1.2 10 1.8 L10 7.9 Q10 8.5 9.4 8.5 L0.6 8.5 Q0 8.5 0 7.9 Z" fill="#fbb912"/><rect x="0" y="1.6" width="10" height="0.6" fill="#f0a800" opacity="0.5"/></svg>
<div class="t" style="left:16.50px;top:215px;font-size:10.09px;color:#fff;font-weight:normal;transform:scaleX(0.9620);transform-origin:0 0;">public_ftp</div>
<div class="t" style="left:160.90px;top:215px;font-size:10.09px;color:#fff;font-weight:normal;transform:scaleX(0.9620);transform-origin:0 0;">Directory</div>
<div class="t" style="left:217.80px;top:215px;font-size:10.09px;color:#fff;font-weight:normal;transform:scaleX(0.9620);transform-origin:0 0;">09/06/2023 ...</div>
<div class="t" style="left:288.80px;top:215px;font-size:10.09px;color:#fff;font-weight:normal;transform:scaleX(0.9620);transform-origin:0 0;">0700</div>
<div class="t" style="left:346.20px;top:215px;font-size:10.09px;color:#fff;font-weight:normal;transform:scaleX(0.9620);transform-origin:0 0;">2454 2451</div>
<svg style="position:absolute;left:1.80px;top:229.24px" width="9.8" height="8.6" viewBox="0 0 10 8.5"><path d="M0 0.6 Q0 0 0.6 0 L3.6 0 L4.6 1.2 L9.4 1.2 Q10 1.2 10 1.8 L10 7.9 Q10 8.5 9.4 8.5 L0.6 8.5 Q0 8.5 0 7.9 Z" fill="#fbb912"/><rect x="0" y="1.6" width="10" height="0.6" fill="#f0a800" opacity="0.5"/></svg>
<div class="t" style="left:16.50px;top:229px;font-size:10.09px;color:#fff;font-weight:normal;transform:scaleX(0.9620);transform-origin:0 0;">public_html</div>
<div class="t" style="left:160.90px;top:229px;font-size:10.09px;color:#fff;font-weight:normal;transform:scaleX(0.9620);transform-origin:0 0;">Directory</div>
<div class="t" style="left:217.80px;top:229px;font-size:10.09px;color:#fff;font-weight:normal;transform:scaleX(0.9620);transform-origin:0 0;">09/21/2023 ...</div>
<div class="t" style="left:288.80px;top:229px;font-size:10.09px;color:#fff;font-weight:normal;transform:scaleX(0.9620);transform-origin:0 0;">0750</div>
<div class="t" style="left:346.20px;top:229px;font-size:10.09px;color:#fff;font-weight:normal;transform:scaleX(0.9620);transform-origin:0 0;">2454 99</div>
</div>
<div style="position:absolute;left:666.50px;top:278.70px;width:10.80px;height:10.60px;background:#c3d0f2;border-top:0.8px solid #e8ecf8;box-sizing:border-box"></div>
<div style="position:absolute;left:1008.00px;top:254.20px;width:11.00px;height:244.80px;background:#fafafa"></div>
<div style="position:absolute;left:1011.30px;top:256.00px;width:5.20px;height:103.50px;background:#7f7f7f;border-radius:3px"></div>
<div style="position:absolute;left:0.00px;top:499.00px;width:507.00px;height:15.00px;background:#f0ebf1"></div>
<div style="position:absolute;left:511.00px;top:499.00px;width:508.00px;height:15.00px;background:#f0ebf1"></div>
<div class="t" style="left:0.50px;top:502px;font-size:10.04px;color:#2e2e2e;font-weight:normal;transform:scaleX(0.9620);transform-origin:0 0;">2 files and 17 directories. Total size: At least 0 bytes</div>
<div class="t" style="left:514.70px;top:502px;font-size:10.16px;color:#2e2e2e;font-weight:normal;transform:scaleX(0.9620);transform-origin:0 0;">Selected 16 files and 20 directories. Total size: 469,050 bytes</div>
<div style="position:absolute;left:0.00px;top:513.40px;width:1019.00px;height:4.20px;background:linear-gradient(#d2d2d2,#d2d2d2 25%,#e3e3e3 35%,#e3e3e3 60%,#d2d2d2 70%,#d2d2d2)"></div>
<div style="position:absolute;left:0.00px;top:517.80px;width:1019.00px;height:73.50px;background:#fff"></div>
<div style="position:absolute;left:0.00px;top:529.20px;width:1019.00px;height:0.80px;background:#ececec"></div>
<div class="t" style="left:0.00px;top:520px;font-size:8.48px;color:#3a3a3a;font-weight:normal;transform:scaleX(0.9620);transform-origin:0 0;">Server/Local file</div>
<div style="position:absolute;left:124.30px;top:519.50px;width:0.70px;height:9.00px;background:#d9d9d9"></div>
<div class="t" style="left:129.00px;top:520px;font-size:8.48px;color:#3a3a3a;font-weight:normal;transform:scaleX(0.9620);transform-origin:0 0;">Direction</div>
<div style="position:absolute;left:166.50px;top:519.50px;width:0.70px;height:9.00px;background:#d9d9d9"></div>
<div class="t" style="left:170.00px;top:520px;font-size:8.48px;color:#3a3a3a;font-weight:normal;transform:scaleX(0.9620);transform-origin:0 0;">Remote file</div>
<div style="position:absolute;left:294.50px;top:519.50px;width:0.70px;height:9.00px;background:#d9d9d9"></div>
<div class="t" style="left:48.50px;width:300px;text-align:right;top:520px;font-size:8.48px;color:#3a3a3a;font-weight:normal;transform:scaleX(0.9620);transform-origin:100% 0;">Size</div>
<div style="position:absolute;left:351.50px;top:519.50px;width:0.70px;height:9.00px;background:#d9d9d9"></div>
<div class="t" style="left:354.50px;top:520px;font-size:8.48px;color:#3a3a3a;font-weight:normal;transform:scaleX(0.9620);transform-origin:0 0;">Priority</div>
<div style="position:absolute;left:393.50px;top:519.50px;width:0.70px;height:9.00px;background:#d9d9d9"></div>
<div class="t" style="left:397.00px;top:520px;font-size:8.48px;color:#3a3a3a;font-weight:normal;transform:scaleX(0.9620);transform-origin:0 0;">Status</div>
<div style="position:absolute;left:500.00px;top:519.50px;width:0.70px;height:9.00px;background:#d9d9d9"></div>
<div style="position:absolute;left:0.00px;top:590.60px;width:1019.00px;height:21.40px;background:linear-gradient(#ececec 0px,#ececec 3px,#d0d0d0 3.2px,#d0d0d0 4px,#dadada 4.2px,#f0f0f0 21px)"></div>
<div style="position:absolute;left:0.50px;top:593.80px;width:68.80px;height:14.60px;background:linear-gradient(#fdfdfd,#f4f4f4);border:0.6px solid #c9c9c9;border-top:none;box-sizing:border-box;border-radius:0 0 2px 2px"></div>
<div class="t" style="left:6.40px;top:596px;font-size:9.83px;color:#1a1a1a;font-weight:bold;transform:scaleX(0.9620);transform-origin:0 0;">Queued files</div>
<div style="position:absolute;left:69.30px;top:593.80px;width:82.70px;height:14.60px;background:linear-gradient(#efefef,#e8e8e8);border:0.6px solid #c9c9c9;border-top:none;border-left:none;box-sizing:border-box;border-radius:0 0 2px 2px"></div>
<div class="t" style="left:75.70px;top:596px;font-size:9.98px;color:#2a2a2a;font-weight:normal;transform:scaleX(0.9620);transform-origin:0 0;">Failed transfers</div>
<div style="position:absolute;left:152.00px;top:593.80px;width:107.20px;height:14.60px;background:linear-gradient(#efefef,#e8e8e8);border:0.6px solid #c9c9c9;border-top:none;border-left:none;box-sizing:border-box;border-radius:0 0 2px 2px"></div>
<div class="t" style="left:159.00px;top:596px;font-size:9.98px;color:#2a2a2a;font-weight:normal;transform:scaleX(0.9620);transform-origin:0 0;">Successful transfers</div>
<div style="position:absolute;left:0.00px;top:611.90px;width:1019.00px;height:9.10px;background:linear-gradient(#d8d8d8 0px,#d8d8d8 1px,#ebebeb 1.2px,#e6e6e6 9px)"></div>
<svg style="position:absolute;left:0;top:0" width="460" height="28" viewBox="0 0 460 28"><rect x="1.4" y="1.6" width="6.8" height="10.2" fill="#d8d4da" opacity="0.6"/><rect x="0.8" y="1.0" width="6.8" height="10.2" fill="#fbfbfb" stroke="#dcdcdc" stroke-width="0.4"/><rect x="5.2" y="1.0" width="2.4" height="10.2" fill="#e6e6e6"/><rect x="15.799999999999999" y="1.6" width="6.8" height="10.2" fill="#d8d4da" opacity="0.6"/><rect x="15.2" y="1.0" width="6.8" height="10.2" fill="#fbfbfb" stroke="#dcdcdc" stroke-width="0.4"/><rect x="19.6" y="1.0" width="2.4" height="10.2" fill="#e6e6e6"/><rect x="8.6" y="3.2" width="6.8" height="10.6" fill="#d8d4da" opacity="0.6"/><rect x="8.0" y="2.6" width="6.8" height="10.6" fill="#fbfbfb" stroke="#dcdcdc" stroke-width="0.4"/><rect x="12.4" y="2.6" width="2.4" height="10.6" fill="#e6e6e6"/><rect x="2.0" y="2.0" width="4.6" height="3.0" fill="#7aa6e6"/><rect x="9.2" y="3.8" width="4.6" height="2.3" rx="1" fill="#5d92e0"/><rect x="16.4" y="2.0" width="4.6" height="3.0" fill="#7aa6e6"/><path d="M1 14.5 H7.5 M15.2 14.5 H22 M8 15.6 H15" stroke="#777" stroke-width="0.8"/><path d="M4.4 9.5 V14 M11.5 11 V15 M18.6 9.5 V14" stroke="#888" stroke-width="0.6"/><circle cx="4.4" cy="14.5" r="1.1" fill="#3cc83c"/><circle cx="11.5" cy="15.6" r="1.1" fill="#3cc83c"/><circle cx="18.6" cy="14.5" r="1.1" fill="#3cc83c"/><path d="M4.4 17.5 V21.5 M11.5 17.5 V21.5 M18.6 17.5 V21.5" stroke="#555" stroke-width="1.2"/><rect x="1" y="20.8" width="21.2" height="1.6" rx="0.6" fill="#555"/><rect x="51" y="1" width="21.6" height="22.5" rx="0.8" fill="#b4b4b4"/><path d="M53.4 0.8 H67.2 L70.6 4.2 V22.2 H53.4 Z" fill="#e9e9e9"/><path d="M67.2 0.8 V4.2 H70.6 Z" fill="#f8f8f8"/><path d="M56 4.3 H63" stroke="#555" stroke-width="1.3" stroke-linecap="round"/><path d="M56 7.1 H60" stroke="#3d82dc" stroke-width="1.3" stroke-linecap="round"/><path d="M62 7.1 H66" stroke="#33c433" stroke-width="1.3" stroke-linecap="round"/><path d="M56 10 H61.5" stroke="#3d82dc" stroke-width="1.3" stroke-linecap="round"/><path d="M63.5 10 H67" stroke="#888" stroke-width="1.3" stroke-linecap="round"/><path d="M56 12.9 H59" stroke="#33c433" stroke-width="1.3" stroke-linecap="round"/><path d="M60.5 12.9 H66" stroke="#8a8a8a" stroke-width="1.3" stroke-linecap="round"/><path d="M56 15.8 H66" stroke="#3d82dc" stroke-width="1.3" stroke-linecap="round"/><path d="M56 18.5 H63" stroke="#555" stroke-width="1.3" stroke-linecap="round"/><path d="M64.5 18.5 H67.5" stroke="#22c422" stroke-width="1.3" stroke-linecap="round"/><rect x="78.9" y="1.4" width="22.4" height="21.8" rx="0.8" fill="#a9a9a9"/><rect x="79.6" y="1.8" width="21" height="3.2" fill="#6e6e6e"/><rect x="80.5" y="2.6" width="3.5" height="1.2" fill="#9a9a9a"/><rect x="95.5" y="2.6" width="4" height="1.2" fill="#9a9a9a"/><rect x="79.6" y="5" width="10" height="4.2" fill="#2ccb2c"/><rect x="79.6" y="9.2" width="10" height="1.6" fill="#f4f8f4"/><rect x="79.6" y="10.8" width="10" height="10.2" fill="#cde2cd"/><rect x="89.6" y="5" width="1.4" height="16" fill="#fafafa"/><rect x="91" y="5" width="9.6" height="16" fill="#e6e6e6"/><rect x="107.6" y="1.4" width="22.1" height="21.8" rx="0.8" fill="#a9a9a9"/><rect x="108.3" y="1.8" width="20.8" height="3.2" fill="#6e6e6e"/><rect x="109" y="2.6" width="3.5" height="1.2" fill="#9a9a9a"/><rect x="123.5" y="2.6" width="4" height="1.2" fill="#9a9a9a"/><rect x="108.3" y="5" width="9.4" height="16" fill="#e6e6e6"/><rect x="117.7" y="5" width="1.4" height="16" fill="#fafafa"/><rect x="119.1" y="5" width="10" height="4.2" fill="#1f78d6"/><rect x="119.1" y="9.2" width="10" height="1.6" fill="#f4f6f8"/><rect x="119.1" y="10.8" width="10" height="10.2" fill="#c9d7e3"/><rect x="136" y="1" width="22" height="22" rx="0.8" fill="#bdbdbd"/><path d="M136 4.3 H146 V1.3 L149 4.3 H152 V1.3 L157.3 5.9 L152 10.5 V7.5 H149 L146 10.5 V7.5 H136 Z" fill="#2dcb2d"/><path d="M157.3 15.2 H147.5 V12.2 L144 15.2 H141.5 V12.2 L136.2 17.1 L141.5 22 V19 H144 L147.5 22 V19 H157.3 Z" fill="#1f78d6"/><path d="M187.4 10.6 A8.2 7.6 0 0 1 201.9 5.7" stroke="#1f77d4" stroke-width="4.2" fill="none"/><path d="M198.3 10.6 H206.9 V2.3 Z" fill="#1f77d4"/><path d="M204.6 12.2 A8.2 7.6 0 0 1 190.1 17.1" stroke="#22c723" stroke-width="4.2" fill="none"/><path d="M193.9 12.2 H185.3 V20.5 Z" fill="#22c723"/><rect x="215.8" y="3" width="2.6" height="19" fill="#2dcb2d"/><path d="M217.1 0.8 L219.9 5 H214.3 Z M217.1 5 L219.9 9.4 H214.3 Z" fill="#2dcb2d"/><rect x="221.6" y="1" width="2.6" height="19" fill="#1f78d6"/><path d="M220.1 13 H225.7 L222.9 17.3 Z M220.1 17.2 H225.7 L222.9 21.6 Z" fill="#1f78d6"/><polygon points="235.00,8.00 234.91,8.92 233.63,9.38 233.29,10.00 233.62,11.32 232.91,11.91 231.68,11.33 231.00,11.53 230.30,12.70 229.38,12.61 228.92,11.33 228.30,10.99 226.98,11.32 226.39,10.61 226.97,9.38 226.77,8.70 225.60,8.00 225.69,7.08 226.97,6.62 227.31,6.00 226.98,4.68 227.69,4.09 228.92,4.67 229.60,4.47 230.30,3.30 231.22,3.39 231.68,4.67 232.30,5.01 233.62,4.68 234.21,5.39 233.63,6.62 233.83,7.30" fill="#4a4a4a"/><circle cx="230.3" cy="8.0" r="1.6" fill="#efeaf0"/><polygon points="235.00,16.60 234.92,17.31 233.96,17.64 233.68,18.10 233.80,19.10 233.19,19.48 232.33,18.94 231.80,19.00 231.09,19.72 230.41,19.48 230.30,18.48 229.92,18.10 228.92,17.99 228.68,17.31 229.40,16.60 229.46,16.07 228.92,15.21 229.30,14.60 230.30,14.72 230.76,14.44 231.09,13.48 231.80,13.40 232.33,14.26 232.84,14.44 233.80,14.10 234.30,14.60 233.96,15.56 234.14,16.07" fill="#4a4a4a"/><circle cx="231.8" cy="16.6" r="1.1" fill="#efeaf0"/><circle cx="252.8" cy="11.4" r="10.5" fill="#d9a3aa"/><path d="M244 5.5 A10.5 10.5 0 0 1 260 4 L245 19 A10.5 10.5 0 0 1 244 5.5Z" fill="#e6a3a9" opacity="0.8"/><path d="M249.2 7.8 L256.4 15 M256.4 7.8 L249.2 15" stroke="#f4f0f2" stroke-width="2.4" stroke-linecap="round"/><rect x="271.4" y="1.6" width="14.2" height="21.6" fill="#dcd8de" opacity="0.7"/><rect x="271" y="1" width="14.2" height="21.5" fill="#e6e6e6"/><rect x="271" y="1" width="7" height="21.5" fill="#fdfdfd"/><path d="M273.8 4.3 H281.6 M273.8 7.2 H281.6" stroke="#2b78d8" stroke-width="1.3" stroke-linecap="round"/><circle cx="277.8" cy="18.6" r="0.85" fill="#333"/><path d="M284 13.8 L290.6 20.6 M290.6 13.8 L284 20.6" stroke="#c01820" stroke-width="2.6"/><rect x="299.4" y="1.6" width="14.9" height="21" fill="#e2dee4" opacity="0.6"/><rect x="299" y="1" width="14.9" height="21" fill="#eeedef"/><rect x="299" y="1" width="7.2" height="21" fill="#f8f7f8"/><path d="M302.2 4.3 H310 M302.2 7.2 H310" stroke="#b0c4ea" stroke-width="1.2" stroke-linecap="round"/><circle cx="306" cy="18.6" r="0.8" fill="#aaa"/><path d="M309.6 17.6 L312.6 20.8 L319.8 13.4" stroke="#8ed48e" stroke-width="2.6" fill="none"/><rect x="348.6" y="4.4" width="21.5" height="15" fill="#fdfdfd"/><rect x="348.6" y="3.8" width="21.5" height="2.2" rx="1" fill="#5a5a5a"/><path d="M350.5 8.5 H368.6" stroke="#4a8ee0" stroke-width="1.2" stroke-linecap="round"/><path d="M350.5 11.4 H358.5" stroke="#d0282a" stroke-width="1.2" stroke-linecap="round"/><path d="M350.5 14.4 H368.6" stroke="#3cc43c" stroke-width="1.2" stroke-linecap="round"/><path d="M350.5 17.2 H358.5" stroke="#f5b840" stroke-width="1.2" stroke-linecap="round"/><path d="M359.3 5 V19" stroke="#5a5a5a" stroke-width="0.9"/><rect x="388" y="1" width="10.5" height="9.8" fill="#fcfcfc"/><path d="M390.5 3 H394 M392 5.8 H397 M393 8.5 H395.5" stroke-width="1.3" stroke="#d33"/><path d="M392 5.8 H397" stroke-width="1.3" stroke="#f3b940"/><path d="M393 8.5 H395.5" stroke-width="1.3" stroke="#3c3"/><rect x="377" y="12.3" width="10.5" height="9.8" fill="#fcfcfc"/><path d="M378.6 14.3 H381.5" stroke-width="1.2" stroke="#f3b940"/><path d="M378.6 17 H384" stroke-width="1.2" stroke="#3c3"/><path d="M378.6 19.8 H382" stroke-width="1.2" stroke="#d33"/><path d="M392 16 L397.5 21" stroke="#555" stroke-width="2.2" stroke-linecap="round"/><circle cx="387.6" cy="11.3" r="6" fill="#e4e4e4" stroke="#5d5d5d" stroke-width="1.3"/><rect x="416.9" y="1" width="9.8" height="10" fill="#fbfbfb"/><rect x="405.4" y="12.2" width="10.4" height="10.3" fill="#fbfbfb"/><path d="M418.5 3 H421 M419 6 H423" stroke="#ddd" stroke-width="0.8"/><path d="M407 14.5 H410 M407 17.5 H412 M407 20 H410" stroke="#ddd" stroke-width="0.8"/><circle cx="415.7" cy="11.5" r="4" fill="#d6d4d8"/><path d="M410.6 10.8 A5.3 5.3 0 0 1 420.5 8.6" stroke="#27c727" stroke-width="2.3" fill="none"/><path d="M423.2 5.8 V11.2 H417.8 Z" fill="#27c727"/><path d="M420.8 12.4 A5.3 5.3 0 0 1 410.9 14.6" stroke="#f5b516" stroke-width="2.3" fill="none"/><path d="M408.2 17.4 V12 H413.6 Z" fill="#f5b516"/><path d="M439.6 5.8 Q440.3 2.4 442.1 2.4 Q443.9 2.4 444.3 5.8 Z M445.9 5.8 Q446.3 2.4 448.1 2.4 Q449.9 2.4 450.6 5.8 Z" fill="#4e4e4e"/><path d="M439.4 5.2 H444.4 L444.6 11.5 H445.6 L445.8 5.2 H450.8 L454.6 14.2 L433.8 14.2 Z" fill="#646464"/><circle cx="438.7" cy="14.9" r="5.0" fill="#5c5c5c"/><circle cx="449.8" cy="14.9" r="5.0" fill="#5c5c5c"/><circle cx="438.7" cy="14.9" r="3.75" fill="#f5b301"/><circle cx="449.8" cy="14.9" r="3.75" fill="#f5b301"/><path d="M437.2 14.2 L438.6 12.8 M448.3 14.2 L449.7 12.8" stroke="#fff6c8" stroke-width="0.9"/><rect x="443.9" y="11.5" width="2.4" height="2.2" fill="#d8d8d8"/></svg>
<svg style="position:absolute;left:0;top:0" width="1024" height="621" viewBox="0 0 1024 621"><path d="M861.2 621 V618.8 A3.2 3.2 0 0 1 867.6 618.8 V621" stroke="#555" stroke-width="1.3" fill="none"/><rect x="859.5" y="619.6" width="10" height="2" fill="#f4b400"/><polygon points="883.20,621.30 883.10,622.31 881.88,622.91 881.49,623.63 881.68,624.98 880.89,625.62 879.61,625.18 878.82,625.42 878.00,626.50 876.99,626.40 876.39,625.18 875.67,624.79 874.32,624.98 873.68,624.19 874.12,622.91 873.88,622.12 872.80,621.30 872.90,620.29 874.12,619.69 874.51,618.97 874.32,617.62 875.11,616.98 876.39,617.42 877.18,617.18 878.00,616.10 879.01,616.20 879.61,617.42 880.33,617.81 881.68,617.62 882.32,618.41 881.88,619.69 882.12,620.48" fill="#444"/><circle cx="878" cy="621.3" r="2.8" fill="#e8e8e8"/><circle cx="878" cy="621.5" r="1.6" fill="#2cc02c"/><circle cx="891.2" cy="621.8" r="5" fill="#d4d4d4" stroke="#777" stroke-width="1"/><circle cx="891.2" cy="621.8" r="3" fill="none" stroke="#999" stroke-width="0.8"/><circle cx="998.7" cy="622" r="3.8" fill="#3ca23c"/><circle cx="1009.2" cy="622" r="3.8" fill="#c04040"/></svg>
<div class="t" style="left:905.20px;top:618px;font-size:8.74px;color:#3a3a3a;font-weight:normal;transform:scaleX(0.9620);transform-origin:0 0;">Queue: empty</div></body></html>
